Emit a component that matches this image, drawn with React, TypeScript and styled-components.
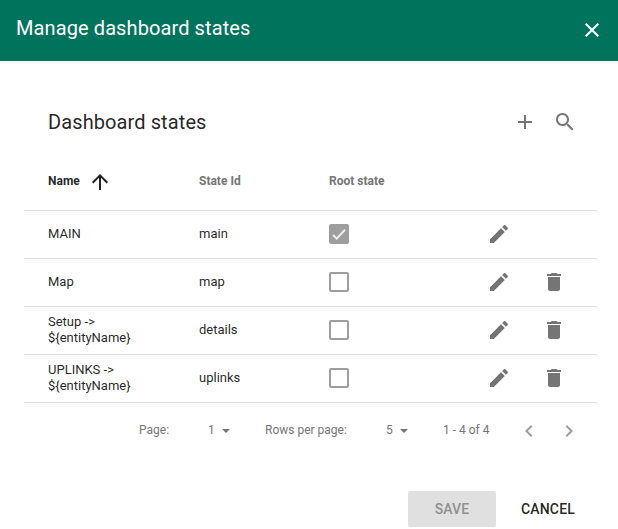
import React from 'react';
import styled, { createGlobalStyle } from 'styled-components';

const GlobalStyle = createGlobalStyle`
  *, *::before, *::after { box-sizing: border-box; }
  body {
    margin: 0;
    background: #fff;
    color: rgba(0, 0, 0, 0.87);
    font-family: Roboto, sans-serif;
    overflow: hidden;
  }
  button { font-family: inherit; border: 0; padding: 0; background: none; color: inherit; }
`;

const Dialog = styled.div`
  width: 618px;
  height: 529px;
  display: flex;
  flex-direction: column;
  background: #fff;
`;

const Toolbar = styled.header`
  height: 61px;
  padding: 0 14px 5px 16px;
  flex: none;
  display: flex;
  align-items: center;
  justify-content: space-between;
  background: #00735d;
  color: #fff;
`;

const Heading = styled.h2`
  margin: 0;
  font-size: 20px;
  font-weight: 400;
  line-height: 24px;
  letter-spacing: 0.1px;
`;

const IconButton = styled.button<{ $nudge?: number }>`
  width: 24px;
  height: 24px;
  display: block;
  margin-top: ${(p) => p.$nudge ?? 0}px;
`;

const Glyph = styled.svg`
  display: block;
  width: 24px;
  height: 24px;
  fill: currentColor;
`;

const Card = styled.section`
  width: 573px;
  margin-left: 24px;
`;

const CardHeader = styled.div`
  height: 64px;
  margin-top: 29px;
  padding: 0 20px 0 24px;
  display: flex;
  align-items: center;
  justify-content: space-between;
`;

const Actions = styled.div`
  display: flex;
  gap: 16px;
  color: #757575;
`;

const Row = styled.div`
  height: 48px;
  padding: 0 0 1px 24px;
  display: grid;
  grid-template-columns: 151px 130px 158px 55px 1fr;
  align-items: center;
  border-top: 1px solid #e0e0e0;
  font-size: 13px;
  line-height: 16px;
`;

const HeadRow = styled(Row)`
  height: 56px;
  padding-bottom: 2px;
  border-top: 0;
  font-size: 12px;
  font-weight: 700;
  color: #757575;
`;

const SortCell = styled.div`
  display: flex;
  align-items: center;
  gap: 8px;
  color: rgba(0, 0, 0, 0.87);
`;

const SortIcon = styled(Glyph)`
  margin-top: 2px;
`;

const Cell = styled.div`
  padding-right: 56px;
  margin-top: -1px;
`;

const HeadCell = styled.div`
  white-space: nowrap;
`;

const Box = styled.span<{ $checked: boolean }>`
  width: 20px;
  height: 20px;
  display: flex;
  border-radius: 2px;
  border: 2px solid #9e9e9e;
  background: ${(p) => (p.$checked ? '#9e9e9e' : 'transparent')};
`;

const Tick = styled.svg`
  width: 16px;
  height: 16px;
  fill: none;
  stroke: #eee;
  stroke-width: 2;
`;

const RowAction = styled(IconButton)`
  color: #757575;
`;

const Pagination = styled.div`
  height: 56px;
  display: flex;
  align-items: center;
  border-top: 1px solid #e0e0e0;
  padding: 0 16px 0 115px;
  font-size: 12px;
  color: #757575;
`;

const Label = styled.span<{ $width: number }>`
  width: ${(p) => p.$width}px;
  padding-bottom: 2px;
  white-space: nowrap;
`;

const Select = styled.span<{ $width: number }>`
  width: ${(p) => p.$width}px;
  padding-bottom: 2px;
  display: flex;
  align-items: center;
  gap: 7px;
`;

const Caret = styled.span`
  margin-top: 3px;
  border: 4px solid transparent;
  border-top-color: #757575;
  border-bottom: 0;
`;

const PageButton = styled(IconButton)`
  color: #9e9e9e;
`;

const Pager = styled.span`
  display: flex;
  gap: 16px;
  margin-left: auto;
`;

const Footer = styled.footer`
  margin-top: 33px;
  padding-left: 408px;
  display: flex;
`;

const FooterButton = styled.button<{ $muted?: boolean }>`
  width: 88px;
  height: 36px;
  margin-right: 8px;
  border-radius: 2px;
  font-size: 14px;
  font-weight: 500;
  letter-spacing: 0.14px;
  color: ${(p) => (p.$muted ? '#8f8f8f' : 'rgba(0, 0, 0, 0.87)')};
  background: ${(p) => (p.$muted ? '#e0e0e0' : 'transparent')};
`;

const paths = {
  close: 'M19 6.41L17.59 5 12 10.59 6.41 5 5 6.41 10.59 12 5 17.59 6.41 19 12 13.41 17.59 19 19 17.59 13.41 12z',
  add: 'M19 13h-6v6h-2v-6H5v-2h6V5h2v6h6v2z',
  search:
    'M15.5 14h-.79l-.28-.27C15.41 12.59 16 11.11 16 9.5 16 5.91 13.09 3 9.5 3S3 5.91 3 9.5 5.91 16 9.5 16c1.61 0 3.09-.59 4.23-1.57l.27.28v.79l5 4.99L20.49 19l-4.99-5zm-6 0C7.01 14 5 11.99 5 9.5S7.01 5 9.5 5 14 7.01 14 9.5 11.99 14 9.5 14z',
  up: 'M4 12l1.41 1.41L11 7.83V20h2V7.83l5.58 5.59L20 12l-8-8-8 8z',
  edit: 'M3 17.25V21h3.75L17.81 9.94l-3.75-3.75L3 17.25zM20.71 7.04c.39-.39.39-1.02 0-1.41l-2.34-2.34c-.39-.39-1.02-.39-1.41 0l-1.83 1.83 3.75 3.75 1.83-1.83z',
  trash: 'M6 19c0 1.1.9 2 2 2h8c1.1 0 2-.9 2-2V7H6v12zM19 4h-3.5l-1-1h-5l-1 1H5v2h14V4z',
  prev: 'M15.41 7.41L14 6l-6 6 6 6 1.41-1.41L10.83 12z',
  next: 'M10 6L8.59 7.41 13.17 12l-4.58 4.59L10 18l6-6z',
};

function Icon({ name }: { name: keyof typeof paths }) {
  return (
    <Glyph viewBox="0 0 24 24" aria-hidden="true">
      <path d={paths[name]} />
    </Glyph>
  );
}

const states = [
  { name: 'MAIN', id: 'main', root: true },
  { name: 'Map', id: 'map', root: false },
  { name: 'Setup -> ${entityName}', id: 'details', root: false },
  { name: 'UPLINKS -> ${entityName}', id: 'uplinks', root: false },
];

export default function App() {
  return (
    <>
      <GlobalStyle />
      <Dialog role="dialog">
        <Toolbar>
          <Heading>Manage dashboard states</Heading>
          <IconButton $nudge={4} aria-label="Close">
            <Icon name="close" />
          </IconButton>
        </Toolbar>
        <Card>
          <CardHeader>
            <Heading>Dashboard states</Heading>
            <Actions>
              <IconButton aria-label="Add state"><Icon name="add" /></IconButton>
              <IconButton aria-label="Search"><Icon name="search" /></IconButton>
            </Actions>
          </CardHeader>
          <HeadRow>
            <SortCell>
              Name
              <SortIcon viewBox="0 0 24 24"><path d={paths.up} /></SortIcon>
            </SortCell>
            <HeadCell>State Id</HeadCell>
            <HeadCell>Root state</HeadCell>
          </HeadRow>
          {states.map((s) => (
            <Row key={s.id}>
              <Cell>{s.name}</Cell>
              <Cell>{s.id}</Cell>
              <Box $checked={s.root} role="checkbox" aria-checked={s.root}>
                {s.root && (
                  <Tick viewBox="0 0 16 16"><path d="M2 9l3.7 3.6L14 3.8" /></Tick>
                )}
              </Box>
              <RowAction aria-label="Edit"><Icon name="edit" /></RowAction>
              {!s.root && (
                <RowAction aria-label="Delete"><Icon name="trash" /></RowAction>
              )}
            </Row>
          ))}
          <Pagination>
            <Label $width={69}>Page:</Label>
            <Select $width={57}>1<Caret /></Select>
            <Label $width={121}>Rows per page:</Label>
            <Select $width={57}>5<Caret /></Select>
            <Label $width={47}>1 - 4 of 4</Label>
            <Pager>
              <PageButton aria-label="Previous"><Icon name="prev" /></PageButton>
              <PageButton aria-label="Next"><Icon name="next" /></PageButton>
            </Pager>
          </Pagination>
        </Card>
        <Footer>
          <FooterButton $muted disabled>SAVE</FooterButton>
          <FooterButton>CANCEL</FooterButton>
        </Footer>
      </Dialog>
    </>
  );
}
